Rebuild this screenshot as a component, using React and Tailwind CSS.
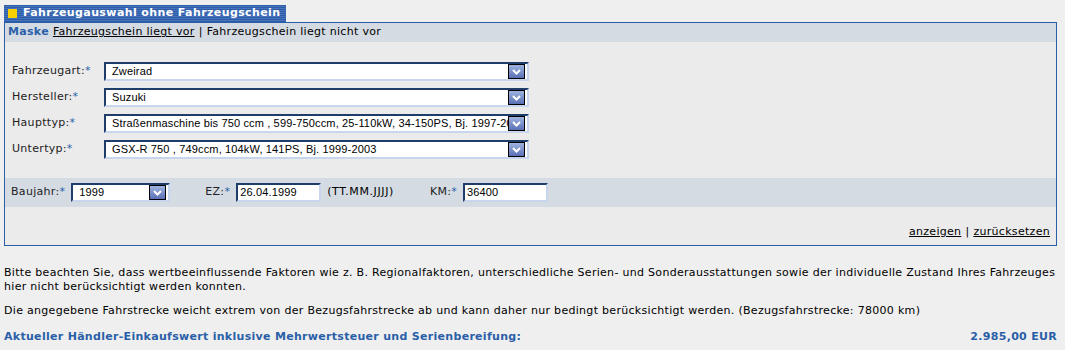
import React from 'react';

const FONT = "font-['DejaVu_Sans',Verdana,sans-serif]";

const Chevron = () => (
  <span className="ml-auto mr-[2px] flex h-[15px] w-[17px] shrink-0 items-center justify-center border border-black bg-[linear-gradient(to_bottom,#9fb3e0,#5a70b4)]">
    <svg width="9" height="6" viewBox="0 0 9 6">
      <path d="M1 1 L4.5 4.5 L8 1" fill="none" stroke="#fff" strokeWidth="2" />
    </svg>
  </span>
);

const Select = ({ value, className = '' }) => (
  <div
    className={`flex h-[19px] items-center overflow-hidden border-2 border-t-[#1f3d6b] border-l-[#1f3d6b] border-r-[#c7d6ec] border-b-[#c7d6ec] bg-white ${className}`}
  >
    <span className="min-w-0 flex-1 overflow-hidden whitespace-nowrap pl-[6px] font-['Liberation_Sans',Arial,sans-serif] text-[11px] tracking-[0.15px] text-black">
      {value}
    </span>
    <Chevron />
  </div>
);

const Input = ({ value, className = '' }) => (
  <div
    className={`flex h-[19px] items-center border-2 border-t-[#1f3d6b] border-l-[#1f3d6b] border-r-[#c7d6ec] border-b-[#c7d6ec] bg-white ${className}`}
  >
    <span className="pl-[2px] font-['Liberation_Sans',Arial,sans-serif] text-[11px] tracking-[0.15px] text-black">{value}</span>
  </div>
);

const Label = ({ children }) => (
  <span className="text-[11px] tracking-[0.3px] text-[#222]">
    {children}
    <span className="text-[#2a5fa8]">*</span>
  </span>
);

const ROWS = [
  ['Fahrzeugart:', 'Zweirad'],
  ['Hersteller:', 'Suzuki'],
  ['Haupttyp:', 'Straßenmaschine bis 750 ccm , 599-750ccm, 25-110kW, 34-150PS, Bj. 1997-2009'],
  ['Untertyp:', 'GSX-R 750 , 749ccm, 104kW, 141PS, Bj. 1999-2003'],
];

export default function App() {
  return (
    <div className={`min-h-[350px] w-[1065px] bg-[#efefef] ${FONT} text-[11px] text-black`}>
      <div className="px-[4px] pt-[5px]">
        {/* Title tab */}
        <div className="flex h-[17px] w-[282px] items-center gap-[6px] bg-[repeating-linear-gradient(to_bottom,#2f5ca6_0px,#2f5ca6_1px,#4574bd_1px,#4574bd_2px)] pl-[4px]">
          <span className="h-[9px] w-[9px] bg-[#f7d000]" />
          <span className="text-[11px] font-bold tracking-[0.4px] text-white">
            Fahrzeugauswahl ohne Fahrzeugschein
          </span>
        </div>

        {/* Panel */}
        <div className="w-[1053px] border border-[#2a5fa8] bg-[#ebebeb]">
          <div className="flex h-[19px] items-center bg-[#d5dbe3] pl-[3px] tracking-[0.3px]">
            <span className="font-bold text-[#2a5fa8]">Maske</span>
            <span className="ml-[4px] underline">Fahrzeugschein liegt vor</span>
            <span className="mx-[4px]">|</span>
            <span>Fahrzeugschein liegt nicht vor</span>
          </div>

          <div className="flex flex-col gap-[7px] pt-[20px] pb-[19px] pl-[7px]">
            {ROWS.map(([label, value]) => (
              <div key={label} className="flex items-center">
                <div className="w-[92px]">
                  <Label>{label}</Label>
                </div>
                <Select value={value} className="w-[425px]" />
              </div>
            ))}
          </div>

          <div className="flex h-[29px] items-center bg-[#d5dbe3] pl-[6px]">
            <Label>Baujahr:</Label>
            <Select value="1999" className="ml-[6px] w-[99px]" />
            <div className="ml-[35px]">
              <Label>EZ:</Label>
            </div>
            <Input value="26.04.1999" className="ml-[6px] w-[85px]" />
            <span className="ml-[6px] tracking-[0.6px]">(TT.MM.JJJJ)</span>
            <div className="ml-[36px]">
              <Label>KM:</Label>
            </div>
            <Input value="36400" className="ml-[6px] w-[85px]" />
          </div>

          <div className="flex justify-end pt-[17px] pb-[4px] pr-[6px] tracking-[0.3px]">
            <span className="underline">anzeigen</span>
            <span className="mx-[4px]">|</span>
            <span className="underline">zurücksetzen</span>
          </div>
        </div>
      </div>

      <div className="px-[4px] pt-[20px] tracking-[0.3px] leading-[14px]">
        <p>
          Bitte beachten Sie, dass wertbeeinflussende Faktoren wie z. B. Regionalfaktoren, unterschiedliche Serien- und
          Sonderausstattungen sowie der individuelle Zustand Ihres Fahrzeuges hier nicht berücksichtigt werden konnten.
        </p>
        <p className="mt-[10px]">
          Die angegebene Fahrstrecke weicht extrem von der Bezugsfahrstrecke ab und kann daher nur bedingt berücksichtigt
          werden. (Bezugsfahrstrecke: 78000 km)
        </p>
        <div className="mt-[12px] flex justify-between pr-[4px] font-bold text-[#2a5fa8]">
          <span>Aktueller Händler-Einkaufswert inklusive Mehrwertsteuer und Serienbereifung:</span>
          <span>2.985,00 EUR</span>
        </div>
      </div>
    </div>
  );
}
